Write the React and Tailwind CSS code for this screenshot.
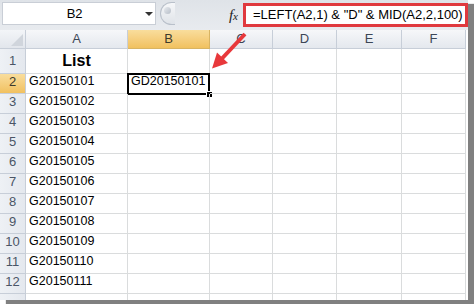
import React from 'react';

const cols = [
  { name: 'A', w: 'w-[102px]' },
  { name: 'B', w: 'w-[82px]' },
  { name: 'C', w: 'w-[63px]' },
  { name: 'D', w: 'w-[64px]' },
  { name: 'E', w: 'w-[65px]' },
  { name: 'F', w: 'w-[64px]' },
];

const values = [
  'G20150101', 'G20150102', 'G20150103', 'G20150104', 'G20150105', 'G20150106',
  'G20150107', 'G20150108', 'G20150109', 'G20150110', 'G20150111',
];

const font = { fontFamily: '"Liberation Sans", Arial, sans-serif' };

const RowHead = ({ n, active, tall }) => (
  <div
    className={`w-[26px] shrink-0 flex items-end justify-center border-r border-b border-[#c7ced8] text-[13px] ${tall ? 'h-[25px] pb-[3px]' : 'h-[20px] pb-[2px]'} ${
      active ? 'bg-gradient-to-b from-[#f9dd9c] to-[#f1c15f] text-[#3d3a2c]' : 'bg-gradient-to-r from-[#eef1f5] to-[#e4e8ee] text-[#4a5566]'
    }`}
  >
    {n}
  </div>
);

const Cell = ({ w, tall, children, bold, selected }) => (
  <div
    className={`${w} shrink-0 relative border-r border-b border-[#dadcdd] flex items-end ${tall ? 'h-[25px] pb-[2px] justify-center' : 'h-[20px] pb-[2px] pl-[3px]'} ${
      bold ? 'text-[16px] font-bold leading-[20px]' : 'text-[12.5px]'
    } text-black`}
  >
    {children}
    {selected && (
      <div className="absolute -left-[1px] -top-[1px] w-[83px] h-[22px] border-2 border-black">
        <div className="absolute -right-[5px] -bottom-[5px] w-[7px] h-[7px] bg-black border border-white" />
      </div>
    )}
  </div>
);

export default function App() {
  return (
    <div className="w-[474px] h-[304px] bg-white overflow-hidden" style={font}>
      <div className="w-[468px] h-[300px] bg-white shadow-[6px_4px_1px_#808080] relative">
        {/* formula bar */}
        <div className="h-[30px] flex bg-gradient-to-b from-[#dfe3e8] to-[#e8ebef] pt-[2px]">
          <div className="ml-[2px] w-[155px] h-[23px] bg-white border border-[#c9ced6] flex items-center">
            <div className="flex-1 text-center text-[13px] text-black pl-[3px]">B2</div>
            <div className="w-[12px] flex justify-center">
              <div className="w-0 h-0 border-l-[4px] border-r-[4px] border-t-[4px] border-l-transparent border-r-transparent border-t-[#333]" />
            </div>
          </div>
          <div className="ml-[4px] w-[15px] h-[23px] rounded-l-full border border-[#b9c0ca] border-r-0 bg-gradient-to-b from-[#f6f7f9] to-[#dfe3e8] flex items-center pl-[3px] pb-[6px]">
            <div className="w-[7px] h-[7px] rounded-full bg-gradient-to-br from-[#e7eaee] to-[#b7bec8]" />
          </div>
          <div className="w-[68px] flex items-center justify-end pr-[5px] pb-[2px]">
            <span className="italic text-[15px] text-[#222]" style={{ fontFamily: '"Liberation Serif", serif' }}>
              f<span className="text-[11px]">x</span>
            </span>
          </div>
          <div className="w-[226px] h-[24px] mt-[1px] border-[3px] border-[#e0393e] bg-white flex items-center pl-[7px] text-[13px] text-black whitespace-nowrap">
            =LEFT(A2,1) &amp; "D" &amp; MID(A2,2,100)
          </div>
        </div>

        {/* column headers */}
        <div className="flex h-[19px]">
          <div className="w-[26px] shrink-0 border-r border-b border-[#c7ced8] bg-gradient-to-b from-[#f3f5f8] to-[#e2e6ec] flex items-end justify-end pr-[2px] pb-[2px]">
            <svg width="12" height="12" viewBox="0 0 12 12">
              <polygon points="12,0 12,12 0,12" fill="#d0d5dc" />
            </svg>
          </div>
          {cols.map((c) => (
            <div
              key={c.name}
              className={`${c.w} shrink-0 flex items-center justify-center border-r border-b text-[13px] ${
                c.name === 'B'
                  ? 'bg-gradient-to-b from-[#f9dd9c] to-[#f1c15f] border-[#d8b463] text-[#3d3a2c]'
                  : 'bg-gradient-to-b from-[#f6f7f9] to-[#e4e8ee] border-[#c7ced8] text-[#3c4656]'
              }`}
            >
              {c.name}
            </div>
          ))}
        </div>

        {/* row 1 */}
        <div className="flex">
          <RowHead n={1} tall />
          <Cell w={cols[0].w} tall bold>List</Cell>
          {cols.slice(1).map((c) => (
            <Cell key={c.name} w={c.w} tall />
          ))}
        </div>

        {values.map((v, i) => (
          <div key={v} className="flex">
            <RowHead n={i + 2} active={i === 0} />
            <Cell w={cols[0].w}>{v}</Cell>
            <Cell w={cols[1].w} selected={i === 0}>{i === 0 ? 'GD20150101' : null}</Cell>
            {cols.slice(2).map((c) => (
              <Cell key={c.name} w={c.w} />
            ))}
          </div>
        ))}

        {/* partial row */}
        <div className="flex h-[6px]">
          <div className="w-[26px] shrink-0 border-r border-[#c7ced8] bg-gradient-to-r from-[#eef1f5] to-[#e4e8ee]" />
          {cols.map((c) => (
            <div key={c.name} className={`${c.w} shrink-0 border-r border-[#dadcdd]`} />
          ))}
        </div>

        {/* red arrow */}
        <svg className="absolute left-0 top-0 pointer-events-none" width="468" height="300">
          <line x1="222" y1="58.5" x2="245" y2="34" stroke="#e8383b" strokeWidth="4" />
          <polygon points="212,68.5 228,63 217,52.5" fill="#e8383b" />
        </svg>
      </div>
    </div>
  );
}
